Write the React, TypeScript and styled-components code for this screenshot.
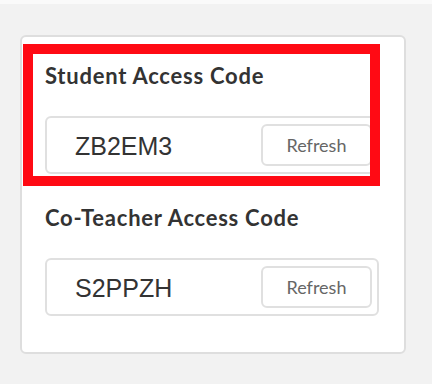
import React from 'react';
import styled, { createGlobalStyle } from 'styled-components';

const GlobalStyle = createGlobalStyle`
  html, body {
    margin: 0;
    padding: 0;
    background-color: #f2f2f2;
  }
  body {
    font-family: Lato, 'Liberation Sans', sans-serif;
    color: #333333;
  }
`;

const Page = styled.div`
  width: 432px;
  height: 384px;
  box-sizing: border-box;
  border-top: 4px solid #fafafa;
  padding: 31px 26px 0 20px;
`;

const Card = styled.div`
  position: relative;
  box-sizing: border-box;
  width: 386px;
  height: 319px;
  padding: 26px 25px 0 23px;
  background-color: #ffffff;
  border: 2px solid #dedede;
  border-radius: 6px;
  display: flex;
  flex-direction: column;
`;

const Section = styled.section`
  & + & {
    margin-top: 31px;
  }
`;

const Title = styled.h3`
  margin: 0 0 27px;
  font-family: Lato, 'Liberation Sans', sans-serif;
  font-weight: 700;
  font-size: 22px;
  line-height: 26px;
  letter-spacing: 0.75px;
  color: #333333;
`;

const CodeBox = styled.div`
  box-sizing: border-box;
  height: 58px;
  display: flex;
  align-items: center;
  justify-content: space-between;
  padding: 0 5px 0 28px;
  border: 2px solid #e0e0e0;
  border-radius: 6px;
  background-color: #ffffff;
`;

const Code = styled.span`
  font-family: 'Liberation Sans', Arial, sans-serif;
  font-size: 25px;
  color: #333333;
  margin-top: 3px;
`;

const RefreshButton = styled.button`
  box-sizing: border-box;
  width: 111px;
  height: 42px;
  border: 2px solid #e0e0e0;
  border-radius: 6px;
  background-color: #ffffff;
  font-family: Lato, 'Liberation Sans', sans-serif;
  font-size: 18px;
  color: #666666;
  cursor: pointer;
`;

const Highlight = styled.div`
  position: absolute;
  left: 1px;
  top: 7px;
  width: 357px;
  height: 142px;
  box-sizing: border-box;
  border: 10px solid #ff0a14;
  pointer-events: none;
`;

const codes = [
  { label: 'Student Access Code', code: 'ZB2EM3' },
  { label: 'Co-Teacher Access Code', code: 'S2PPZH' },
];

const App = () => {
  return (
    <>
      <GlobalStyle />
      <Page>
        <Card>
          {codes.map(item => (
            <Section key={item.label}>
              <Title>{item.label}</Title>
              <CodeBox>
                <Code>{item.code}</Code>
                <RefreshButton type='button'>Refresh</RefreshButton>
              </CodeBox>
            </Section>
          ))}
          <Highlight />
        </Card>
      </Page>
    </>
  );
};

export default App;
